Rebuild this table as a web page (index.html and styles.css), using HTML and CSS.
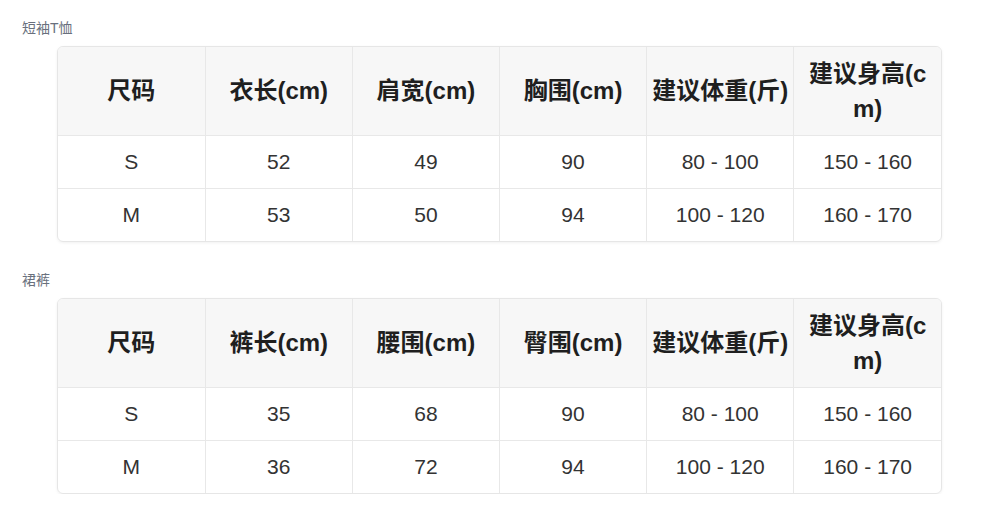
FILE: index.html
```html
<!DOCTYPE html>
<html lang="zh-CN">
<head>
<meta charset="utf-8">
<title>尺码表</title>
<link rel="stylesheet" href="styles.css">
</head>
<body>
<section class="size-section first">
  <div class="size-title">短袖T恤</div>
  <div class="table-wrap">
    <table class="size-table">
      <thead>
        <tr><th>尺码</th><th>衣长(cm)</th><th>肩宽(cm)</th><th>胸围(cm)</th><th>建议体重(斤)</th><th>建议身高(cm)</th></tr>
      </thead>
      <tbody>
        <tr><td>S</td><td>52</td><td>49</td><td>90</td><td>80 - 100</td><td>150 - 160</td></tr>
        <tr><td>M</td><td>53</td><td>50</td><td>94</td><td>100 - 120</td><td>160 - 170</td></tr>
      </tbody>
    </table>
  </div>
</section>
<section class="size-section">
  <div class="size-title">裙裤</div>
  <div class="table-wrap">
    <table class="size-table">
      <thead>
        <tr><th>尺码</th><th>裤长(cm)</th><th>腰围(cm)</th><th>臀围(cm)</th><th>建议体重(斤)</th><th>建议身高(cm)</th></tr>
      </thead>
      <tbody>
        <tr><td>S</td><td>35</td><td>68</td><td>90</td><td>80 - 100</td><td>150 - 160</td></tr>
        <tr><td>M</td><td>36</td><td>72</td><td>94</td><td>100 - 120</td><td>160 - 170</td></tr>
      </tbody>
    </table>
  </div>
</section>
</body>
</html>
```
FILE: styles.css
```css
html, body {
  margin: 0;
  padding: 0;
  background: #ffffff;
}
body {
  font-family: "Liberation Sans", "Noto Sans CJK SC", sans-serif;
  color: #333333;
}
.size-section {
  padding-top: 28px;
}
.size-section.first {
  padding-top: 18px;
}
.size-title {
  padding-left: 22px;
  font-size: 14px;
  line-height: 20px;
  color: #69707d;
  margin-bottom: 8px;
}
.table-wrap {
  margin-left: 57px;
  width: 885px;
  box-sizing: border-box;
  border: 1px solid #e6e6e6;
  border-radius: 6px;
  overflow: hidden;
  box-shadow: 0 1px 3px rgba(0, 0, 0, 0.06);
}
.size-table {
  width: 100%;
  border-collapse: collapse;
  table-layout: fixed;
}
.size-table th,
.size-table td {
  text-align: center;
  border-right: 1px solid #e8e8e8;
  border-bottom: 1px solid #e8e8e8;
  padding: 0 4px;
}
.size-table th:last-child,
.size-table td:last-child {
  border-right: none;
}
.size-table tbody tr:last-child td {
  border-bottom: none;
}
.size-table th {
  background: #f7f7f7;
  font-size: 24px;
  font-weight: bold;
  line-height: 35px;
  height: 88px;
  color: #1f1f1f;
  box-sizing: border-box;
  word-break: break-all;
}
.size-table td {
  font-size: 21px;
  line-height: 30px;
  height: 53px;
  box-sizing: border-box;
  color: #333333;
}
```
